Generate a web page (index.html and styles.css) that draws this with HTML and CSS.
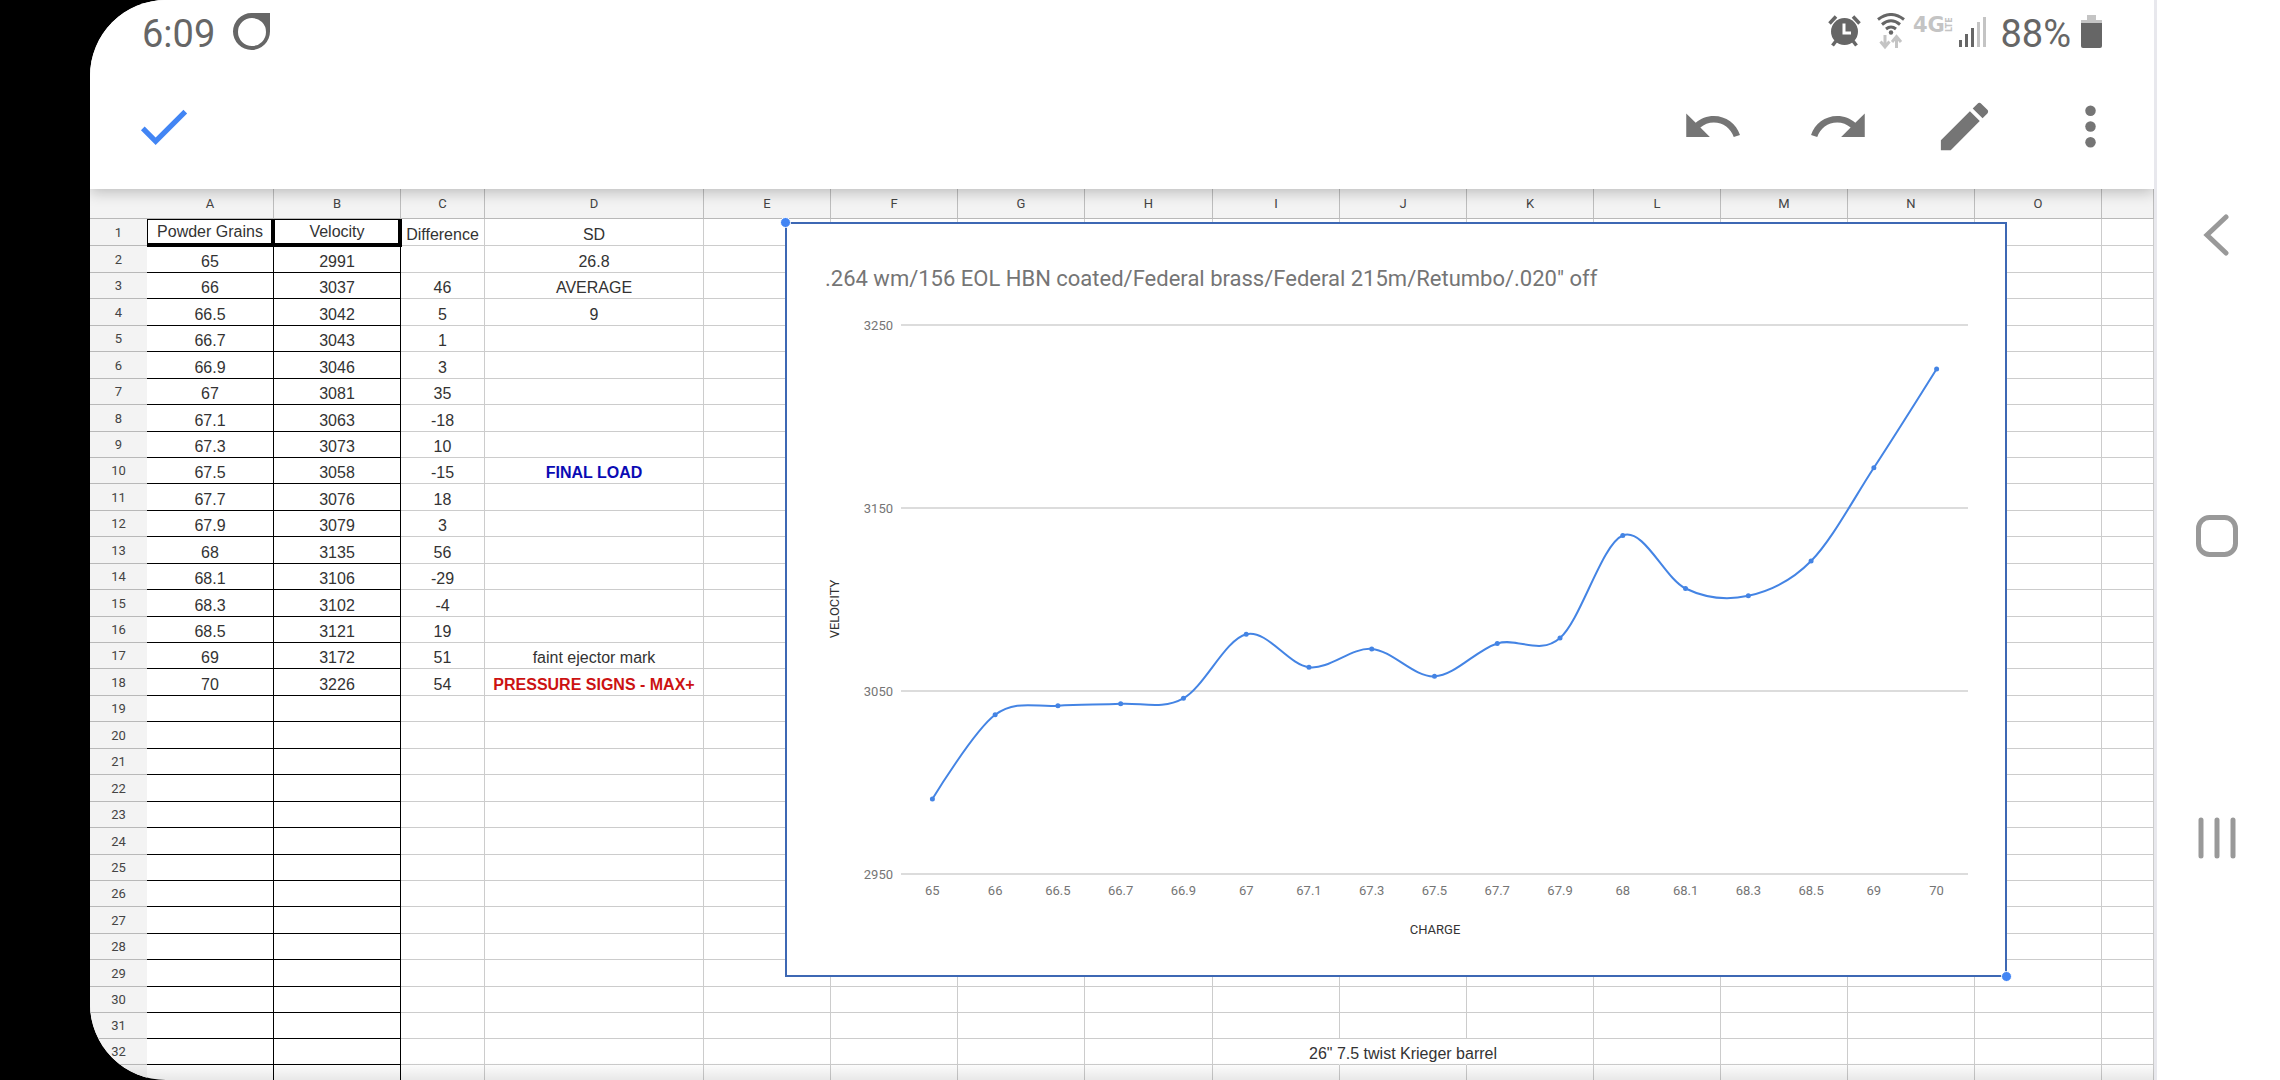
FILE: index.html
```html
<!DOCTYPE html>
<html lang="en">
<head>
<meta charset="utf-8">
<meta name="viewport" content="width=device-width, initial-scale=1">
<title>Load development</title>
<link rel="stylesheet" href="styles.css">
</head>
<body>
<div class="device">
  <main class="app">
    <div class="statusbar">
      <span class="clock">6:09</span>
      <svg class="notify" viewBox="0 0 37 37" width="37" height="37" aria-hidden="true"><path fill="#666" fill-rule="evenodd" d="M18.500 0H37V18.500A18.500 18.500 0 1 1 18.500 0ZM19 5A14 14 0 1 0 19 33A14 14 0 1 0 19 5Z"/></svg>
      <div class="indicators">
        <svg class="alarm" viewBox="0 0 33 32" width="33" height="32" aria-hidden="true">
          <circle cx="16.500" cy="16.500" r="13.500" fill="#666"/>
          <path d="M1.500 8.500L8 1.500M31.500 8.500L25 1.500M8 26L4.500 30.500M25 26L28.500 30.500" stroke="#666" stroke-width="3.500" fill="none"/>
          <path d="M16 8.500V18H23" stroke="#fff" stroke-width="3" fill="none"/>
        </svg>
        <svg class="wifi" viewBox="0 0 28 37" width="28" height="37" aria-hidden="true">
          <g fill="none" stroke="#666" stroke-width="3"><path d="M1 6.500Q14 -3.500 27 6.500"/><path d="M5 11.500Q14 4 23 11.500"/><path d="M9 16Q14 12 19 16"/></g>
          <circle cx="14" cy="19.500" r="2.200" fill="#666"/>
          <g fill="none" stroke="#c4c4c4" stroke-width="3"><path d="M8 22V33M3.500 28.500L8 34L12.500 28.500"/><path d="M19.500 35V24M15 29L19.500 23.500L24 29"/></g>
        </svg>
        <svg class="network" viewBox="0 0 40 18" width="40" height="18" role="img" aria-label="4G LTE">
          <text class="net-4g" x="0" y="17">4G</text>
          <text class="net-lte" transform="rotate(-90)" x="-17" y="39">LTE</text>
        </svg>
        <svg class="signal" viewBox="0 0 27 30" width="27" height="30" aria-hidden="true"><path fill="#666" d="M0 23h3v7H0zM6 17h3v13H6zM12 11h3v19h-3z"/><path fill="#c4c4c4" d="M18 5h3v25h-3zM24 0h3v30h-3z"/></svg>
        <span class="charge">88%</span>
        <svg class="battery" viewBox="0 0 21 33" width="21" height="33" aria-hidden="true"><path fill="#c4c4c4" d="M6 0h9v5h6v5H0V5h6z"/><path fill="#666" d="M0 8h21v23q0 2-2 2H2q-2 0-2-2z"/></svg>
      </div>
    </div>

    <header class="toolbar">
      <button class="tool done" type="button" aria-label="Done"><svg viewBox="0 0 24 24"><path d="M9 16.170L4.830 12l-1.420 1.410L9 19 21 7l-1.410-1.410z"/></svg></button>
      <button class="tool" type="button" aria-label="Undo"><svg viewBox="0 0 24 24"><path d="M12.500 8c-2.650 0-5.050.990-6.900 2.600L2 7v9h9l-3.620-3.620c1.390-1.160 3.160-1.880 5.120-1.880 3.540 0 6.550 2.310 7.600 5.500l2.370-.780C21.080 11.030 17.150 8 12.500 8z"/></svg></button>
      <button class="tool" type="button" aria-label="Redo"><svg viewBox="0 0 24 24"><path d="M18.400 10.600C16.550 8.990 14.150 8 11.500 8c-4.650 0-8.580 3.030-9.960 7.220L3.900 16c1.050-3.190 4.050-5.500 7.600-5.500 1.950 0 3.730.720 5.120 1.880L13 16h9V7l-3.600 3.600z"/></svg></button>
      <button class="tool" type="button" aria-label="Edit chart"><svg viewBox="0 0 24 24"><path d="M3 17.250V21h3.750L17.810 9.940l-3.750-3.750L3 17.250zM20.710 7.040c.390-.390.390-1.020 0-1.410l-2.340-2.340c-.390-.390-1.020-.390-1.410 0l-1.830 1.830 3.750 3.750 1.830-1.830z"/></svg></button>
      <button class="tool" type="button" aria-label="More options"><svg viewBox="0 0 24 24"><circle cx="12" cy="6" r="2"/><circle cx="12" cy="12" r="2"/><circle cx="12" cy="18" r="2"/></svg></button>
    </header>

    <section class="sheet">
      <table class="grid">
        <colgroup>
          <col class="w-index"><col class="w-std"><col class="w-std"><col class="w-c"><col class="w-d">
          <col class="w-std" span="3"><col class="w-h"><col class="w-std" span="7"><col>
        </colgroup>
        <thead>
          <tr><th></th><th>A</th><th>B</th><th>C</th><th>D</th><th>E</th><th>F</th><th>G</th><th>H</th><th>I</th><th>J</th><th>K</th><th>L</th><th>M</th><th>N</th><th>O</th><th></th></tr>
        </thead>
        <tbody id="rows"></tbody>
      </table>
      <figure class="chart">
        <svg id="plot" class="plot" role="img" aria-label="Velocity by powder charge"></svg>
        <span class="handle handle-start"></span>
        <span class="handle handle-end"></span>
      </figure>
    </section>
  </main>

  <nav class="sysnav" aria-label="System">
    <button type="button" aria-label="Back"><svg viewBox="0 0 44 44"><path d="M31 4L12 22L31 40"/></svg></button>
    <button type="button" aria-label="Home"><svg viewBox="0 0 44 44"><rect x="3.500" y="3.500" width="37" height="37" rx="11"/></svg></button>
    <button type="button" aria-label="Recent apps"><svg viewBox="0 0 44 44"><path d="M6 4V40M22 4V40M38 4V40"/></svg></button>
  </nav>
</div>
<script src="script.js"></script>
</body>
</html>
```
FILE: styles.css
```css
* { box-sizing: border-box; }

body {
  margin: 0;
  background: #000;
  font-family: Roboto, "Liberation Sans", sans-serif;
}

button {
  margin: 0;
  padding: 0;
  border: 0;
  background: none;
}

.device {
  display: flex;
  height: 100vh;
  padding-left: 90px;
  overflow: hidden;
}

.app {
  flex: 1;
  min-width: 0;
  display: flex;
  flex-direction: column;
  overflow: hidden;
  background: #fff;
  border-radius: 76px 0 0 76px;
}

/* status bar, above the toolbar so that its shadow only falls downwards */
.statusbar {
  position: relative;
  z-index: 2;
  display: flex;
  align-items: flex-start;
  height: 64px;
  padding: 13px 52px 0 52px;
  background: #fff;
  color: #666;
  font-size: 38px;
  line-height: 42px;
}

.notify { margin-left: 18px; }

.indicators {
  display: flex;
  align-items: flex-start;
  margin-left: auto;
}

.alarm { margin-top: 2px; }
.wifi { margin-left: 16px; }
.network { margin: 2px 0 0 8px; overflow: visible; }
.signal { margin: 4px 0 0 6px; }
.charge { margin-left: 14px; }
.battery { margin: 2px 0 0 10px; }

.net-4g {
  font: bold 21px "DejaVu Sans", sans-serif;
  fill: #c4c4c4;
}

.net-lte {
  font: bold 8px "DejaVu Sans", sans-serif;
  fill: #c4c4c4;
}

/* toolbar */
.toolbar {
  position: relative;
  z-index: 1;
  display: flex;
  height: 125px;
  padding: 0 1px 0 10px;
  background: #fff;
  box-shadow: 0 3px 14px rgba(0, 0, 0, 0.24);
}

.tool {
  display: flex;
  align-items: center;
  justify-content: center;
  width: 126px;
  fill: #757575;
}

.tool svg {
  width: 63px;
  height: 63px;
}

.done {
  margin-right: auto;
  fill: #4285f4;
}

/* spreadsheet */
.sheet {
  position: relative;
  flex: 1;
  min-height: 0;
  overflow: hidden;
}

.sheet::after {
  content: "";
  position: absolute;
  inset: auto 0 0 0;
  height: 18px;
  background: linear-gradient(transparent, rgba(0, 0, 0, 0.09));
}

.grid {
  width: 100%;
  table-layout: fixed;
  border-collapse: separate;
  border-spacing: 0;
}

.w-index { width: 57px; }
.w-std { width: 127px; }
.w-c { width: 84px; }
.w-d { width: 219px; }
.w-h { width: 128px; }

.grid th {
  padding: 0;
  background: #f3f3f3;
  border-bottom: 1px solid #b8b8b8;
  color: #444;
  font-size: 13px;
  font-weight: 400;
  line-height: 16px;
}

.grid thead th {
  height: 30px;
  border-right: 1px solid #bdbdbd;
}

.grid thead th:first-child { border-right: 0; }

.grid tbody th {
  padding-bottom: 4px;
  vertical-align: bottom;
}

.grid td {
  height: 26px;
  padding: 0 0 1px;
  border-right: 1px solid #ccc;
  border-bottom: 1px solid #ccc;
  color: #333;
  font-family: "Liberation Sans", Arial, sans-serif;
  font-size: 16px;
  line-height: 18px;
  text-align: center;
  vertical-align: bottom;
  white-space: nowrap;
}

.grid .tall td { height: 27px; }
.grid td.boxed { border-color: #000; }

.grid td.title {
  position: relative;
  padding-bottom: 4px;
}

.grid td.title::after {
  content: "";
  position: absolute;
  inset: 0 -2px -2px 0;
  border: solid #000;
  border-width: 1px 4px 4px 1px;
}

.grid td.final { color: #0b0bb4; font-weight: 700; }
.grid td.warning { color: #cc1212; font-weight: 700; }
.grid td.open { border-right-color: transparent; }

.spill {
  display: block;
  margin: 0 -40px;
}

/* selected chart, floating over the cells */
.chart {
  position: absolute;
  top: 33px;
  left: 695px;
  width: 1222px;
  height: 755px;
  margin: 0;
  background: #fff;
  border: 2px solid #3d68b4;
}

.plot {
  display: block;
  width: 100%;
  height: 100%;
}

.handle {
  position: absolute;
  width: 11px;
  height: 11px;
  background: #4285f4;
  border: 1px solid #fff;
  border-radius: 50%;
}

.handle-start { top: -7px; left: -7px; }
.handle-end { right: -7px; bottom: -7px; }

.plot-title { font-size: 22px; fill: #757575; }
.tick { font-size: 13px; fill: #757575; }
.axis { font-size: 13px; fill: #333; }
.tick-x, .axis { text-anchor: middle; }
.tick-y { text-anchor: end; }
.rule { stroke: #dcdcdc; stroke-width: 2; }
.curve { fill: none; stroke: #4484e4; stroke-width: 2; }
.dot { fill: #4484e4; }

/* system navigation */
.sysnav {
  display: flex;
  flex-direction: column;
  align-items: center;
  justify-content: center;
  width: 126px;
  padding: 0 4px 4px 0;
  background: #fff;
  border-left: 3px solid #e8e8ed;
}

.sysnav button {
  width: 100%;
  height: 28%;
}

.sysnav svg {
  width: 44px;
  height: 44px;
  fill: none;
  stroke: #999;
  stroke-width: 5;
  stroke-linecap: round;
}
```
FILE: script.js
```js
const loads = [
  ["65", 2991], ["66", 3037], ["66.5", 3042], ["66.7", 3043], ["66.9", 3046],
  ["67", 3081], ["67.1", 3063], ["67.3", 3073], ["67.5", 3058], ["67.7", 3076],
  ["67.9", 3079], ["68", 3135], ["68.1", 3106], ["68.3", 3102], ["68.5", 3121],
  ["69", 3172], ["70", 3226]
];

const notes = {
  1: ["SD"],
  2: ["26.8"],
  3: ["AVERAGE"],
  4: ["9"],
  10: ["FINAL LOAD", "final"],
  17: ["faint ejector mark"],
  18: ["PRESSURE SIGNS - MAX+", "warning"]
};

// Rows that round up to 27px at this zoom level.
const tall = new Set([1, 2, 4, 6, 8, 11, 13, 15, 18, 20, 22, 24, 27, 29]);

const body = document.getElementById("rows");

for (let n = 1; n <= 33; n++) {
  const row = body.insertRow();
  if (tall.has(n)) row.className = "tall";
  const index = document.createElement("th");
  index.textContent = n <= 32 ? n : "";
  row.append(index);

  const cells = Array.from({ length: 16 }, () => row.insertCell());
  cells[0].className = cells[1].className = "boxed";

  if (n === 1) {
    cells[0].textContent = "Powder Grains";
    cells[1].textContent = "Velocity";
    cells[2].textContent = "Difference";
    cells[0].classList.add("title");
    cells[1].classList.add("title");
  } else if (loads[n - 2]) {
    const [charge, velocity] = loads[n - 2];
    cells[0].textContent = charge;
    cells[1].textContent = velocity;
    if (n > 2) cells[2].textContent = velocity - loads[n - 3][1];
  }

  if (notes[n]) {
    cells[3].textContent = notes[n][0];
    if (notes[n][1]) cells[3].className = notes[n][1];
  }

  if (n === 32) {
    cells[8].className = cells[9].className = "open";
    const spill = document.createElement("span");
    spill.className = "spill";
    spill.textContent = '26" 7.5 twist Krieger barrel';
    cells[9].append(spill);
  }
}

const plot = document.getElementById("plot");

function draw(tag, attrs, text) {
  const el = document.createElementNS("http://www.w3.org/2000/svg", tag);
  for (const key in attrs) el.setAttribute(key, attrs[key]);
  if (text !== undefined) el.textContent = text;
  plot.append(el);
}

const left = 114, right = 1181, bottom = 650, top_ = 101;
const step = (right - left) / loads.length;
const toY = v => bottom - (v - 2950) * (bottom - top_) / 300;

draw("text", { class: "plot-title", x: 38, y: 62 },
  '.264 wm/156 EOL HBN coated/Federal brass/Federal 215m/Retumbo/.020" off');

for (const v of [3250, 3150, 3050, 2950]) {
  const y = Math.round(toY(v));
  draw("line", { class: "rule", x1: left, x2: right, y1: y, y2: y });
  draw("text", { class: "tick tick-y", x: 106, y: y + 5 }, v);
}

const pts = loads.map(([, v], i) => [left + step * (i + 0.5), toY(v)]);

// Handle of point i: a sixth of the way between its neighbours; none at the ends.
function tangent(i) {
  if (i === 0 || i === pts.length - 1) return [0, 0];
  return [0, 1].map(k => (pts[i + 1][k] - pts[i - 1][k]) / 6);
}

let d = "M" + pts[0];
for (let i = 1; i < pts.length; i++) {
  const a = tangent(i - 1), b = tangent(i);
  d += ` C${pts[i - 1][0] + a[0]},${pts[i - 1][1] + a[1]} ${pts[i][0] - b[0]},${pts[i][1] - b[1]} ${pts[i]}`;
}
draw("path", { class: "curve", d });

pts.forEach(([x, y], i) => {
  draw("circle", { class: "dot", cx: x, cy: y, r: 2.5 });
  draw("text", { class: "tick tick-x", x, y: 671 }, loads[i][0]);
});

draw("text", { class: "axis", x: 648, y: 710 }, "CHARGE");
draw("text", { class: "axis", transform: "rotate(-90)", x: -385, y: 52 }, "VELOCITY");
```
